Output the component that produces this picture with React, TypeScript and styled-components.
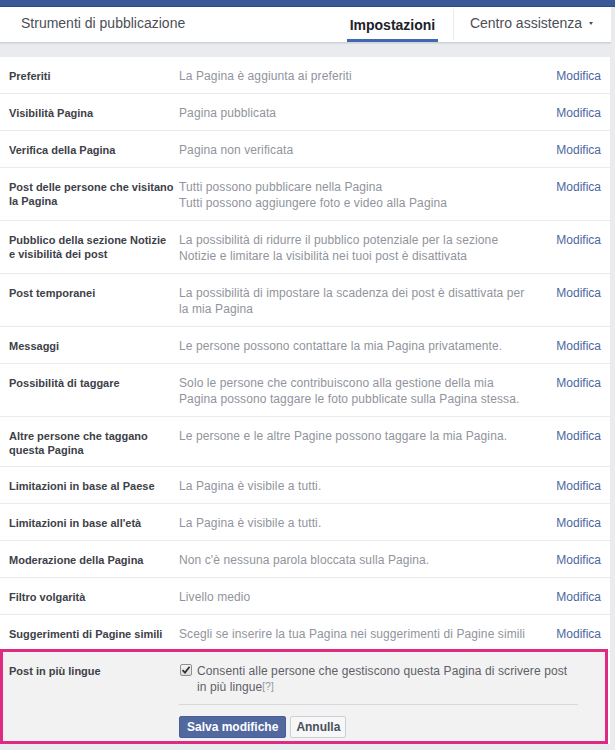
import React from "react";
import styled, { createGlobalStyle } from "styled-components";

const GlobalStyle = createGlobalStyle`
  html, body { margin: 0; padding: 0; }
  body {
    background: #e9ebee;
    font-family: "Liberation Sans", Arial, Helvetica, sans-serif;
    -webkit-font-smoothing: antialiased;
  }
  * { box-sizing: border-box; }
`;

const Page = styled.div`
  width: 615px;
  min-height: 750px;
  background: #e9ebee;
`;

const TopBar = styled.div`
  height: 7px;
  background: #3b5998;
  border-bottom: 1px solid #2f4a85;
`;

const Nav = styled.nav`
  width: 611px;
  height: 36px;
  background: #fff;
  border-bottom: 1px solid #cfd2d7;
  box-shadow: 0 1px 1px rgba(0, 0, 0, 0.06);
  display: flex;
  align-items: stretch;
  font-size: 14px;
  color: #4b4f56;
`;

const NavLink = styled.div`
  display: flex;
  align-items: center;
  padding: 0 0 4px 21px;
  white-space: nowrap;
`;

const Spacer = styled.div`
  flex: 1;
`;

const Tab = styled.div`
  width: 91px;
  margin-right: 15px;
  display: flex;
  align-items: center;
  justify-content: center;
  padding-top: 3px;
  font-weight: bold;
  color: #1d2129;
  border-bottom: 3px solid #4267b2;
  white-space: nowrap;
`;

const Dropdown = styled.div`
  display: flex;
  align-items: center;
  gap: 7px;
  border-left: 1px solid #e9ebee;
  padding: 0 18px 4px 16px;
  white-space: nowrap;
  margin: 2px 0;
`;

const Caret = styled.span`
  display: inline-block;
  width: 0;
  height: 0;
  border-left: 2.5px solid transparent;
  border-right: 2.5px solid transparent;
  border-top: 3px solid #4b4f56;
  margin-top: 1px;
`;

const Card = styled.div`
  width: 610px;
  margin-top: 14px;
  background: #fff;
`;

const Row = styled.div`
  display: grid;
  grid-template-columns: 170px 1fr auto;
  padding: 11px 9px 9px 9px;
  border-bottom: 1px solid #e9ebee;
`;

const Label = styled.div`
  font-size: 11px;
  font-weight: bold;
  line-height: 14px;
  color: #3d4148;
  padding-top: 1px;
`;

const Value = styled.div`
  font-size: 12px;
  line-height: 16px;
  letter-spacing: 0.1px;
  color: #90949c;
`;

const Edit = styled.a`
  font-size: 12px;
  line-height: 16px;
  color: #4b67a1;
  text-decoration: none;
  cursor: pointer;
`;

const EditRow = styled.div`
  display: grid;
  grid-template-columns: 170px 1fr;
  width: 608px;
  margin-top: -3px;
  padding: 11px 9px 3px 6px;
  background: #f2f2f2;
  border: 3px solid #de2a80;
`;

const EditBody = styled.div`
  display: flex;
  flex-direction: column;
  padding-right: 18px;
`;

const CheckLine = styled.label`
  display: flex;
  align-items: flex-start;
  gap: 5px;
  font-size: 12px;
  line-height: 16px;
  letter-spacing: 0.1px;
  color: #5d6168;
`;

const Box = styled.span`
  flex: none;
  width: 12px;
  height: 12px;
  margin: 1px 0 0 1px;
  border: 1px solid #8e8f8f;
  border-radius: 2px;
  background: linear-gradient(#f4f4f4, #dcdcdc);
  display: flex;
  align-items: center;
  justify-content: center;
`;

const Help = styled.span`
  font-size: 10px;
  color: #90949c;
  vertical-align: 1px;
`;

const Divider = styled.div`
  height: 1px;
  background: #d6d8dc;
  margin: 9px 0 11px;
`;

const Buttons = styled.div`
  display: flex;
  gap: 4px;
`;

const Button = styled.button<{ $primary?: boolean }>`
  height: 22px;
  padding: 0 ${(p) => (p.$primary ? "7px" : "5px")};
  font-family: inherit;
  font-size: 12px;
  font-weight: bold;
  border: 1px solid ${(p) => (p.$primary ? "#46609a" : "#ced0d4")};
  background: ${(p) => (p.$primary ? "#52699f" : "#f6f7f9")};
  color: ${(p) => (p.$primary ? "#fff" : "#4b4f56")};
  border-radius: 2px;
  cursor: pointer;
`;

type Item = { label: string[]; value: string[] };

const items: Item[] = [
  { label: ["Preferiti"], value: ["La Pagina è aggiunta ai preferiti"] },
  { label: ["Visibilità Pagina"], value: ["Pagina pubblicata"] },
  { label: ["Verifica della Pagina"], value: ["Pagina non verificata"] },
  {
    label: ["Post delle persone che visitano", "la Pagina"],
    value: ["Tutti possono pubblicare nella Pagina", "Tutti possono aggiungere foto e video alla Pagina"],
  },
  {
    label: ["Pubblico della sezione Notizie", "e visibilità dei post"],
    value: [
      "La possibilità di ridurre il pubblico potenziale per la sezione",
      "Notizie e limitare la visibilità nei tuoi post è disattivata",
    ],
  },
  {
    label: ["Post temporanei"],
    value: ["La possibilità di impostare la scadenza dei post è disattivata per", "la mia Pagina"],
  },
  { label: ["Messaggi"], value: ["Le persone possono contattare la mia Pagina privatamente."] },
  {
    label: ["Possibilità di taggare"],
    value: [
      "Solo le persone che contribuiscono alla gestione della mia",
      "Pagina possono taggare le foto pubblicate sulla Pagina stessa.",
    ],
  },
  {
    label: ["Altre persone che taggano", "questa Pagina"],
    value: ["Le persone e le altre Pagine possono taggare la mia Pagina."],
  },
  { label: ["Limitazioni in base al Paese"], value: ["La Pagina è visibile a tutti."] },
  { label: ["Limitazioni in base all'età"], value: ["La Pagina è visibile a tutti."] },
  { label: ["Moderazione della Pagina"], value: ["Non c'è nessuna parola bloccata sulla Pagina."] },
  { label: ["Filtro volgarità"], value: ["Livello medio"] },
  {
    label: ["Suggerimenti di Pagine simili"],
    value: ["Scegli se inserire la tua Pagina nei suggerimenti di Pagine simili"],
  },
];

const Lines = ({ lines }: { lines: string[] }) => (
  <>
    {lines.map((l, i) => (
      <React.Fragment key={i}>
        {i > 0 && <br />}
        {l}
      </React.Fragment>
    ))}
  </>
);

export default function App() {
  return (
    <Page>
      <GlobalStyle />
      <TopBar />
      <Nav>
        <NavLink>Strumenti di pubblicazione</NavLink>
        <Spacer />
        <Tab>Impostazioni</Tab>
        <Dropdown>
          Centro assistenza
          <Caret />
        </Dropdown>
      </Nav>
      <Card>
        {items.map((it, i) => (
          <Row key={i}>
            <Label>
              <Lines lines={it.label} />
            </Label>
            <Value>
              <Lines lines={it.value} />
            </Value>
            <Edit>Modifica</Edit>
          </Row>
        ))}
        <EditRow>
          <Label>Post in più lingue</Label>
          <EditBody>
            <CheckLine>
              <Box>
                <svg width="10" height="10" viewBox="0 0 10 10">
                  <path d="M1.5 5.2 L4 7.6 L8.6 1.8" fill="none" stroke="#333" strokeWidth="1.8" />
                </svg>
              </Box>
              <span>
                Consenti alle persone che gestiscono questa Pagina di scrivere post
                <br />
                in più lingue<Help>[?]</Help>
              </span>
            </CheckLine>
            <Divider />
            <Buttons>
              <Button $primary>Salva modifiche</Button>
              <Button>Annulla</Button>
            </Buttons>
          </EditBody>
        </EditRow>
      </Card>
    </Page>
  );
}
